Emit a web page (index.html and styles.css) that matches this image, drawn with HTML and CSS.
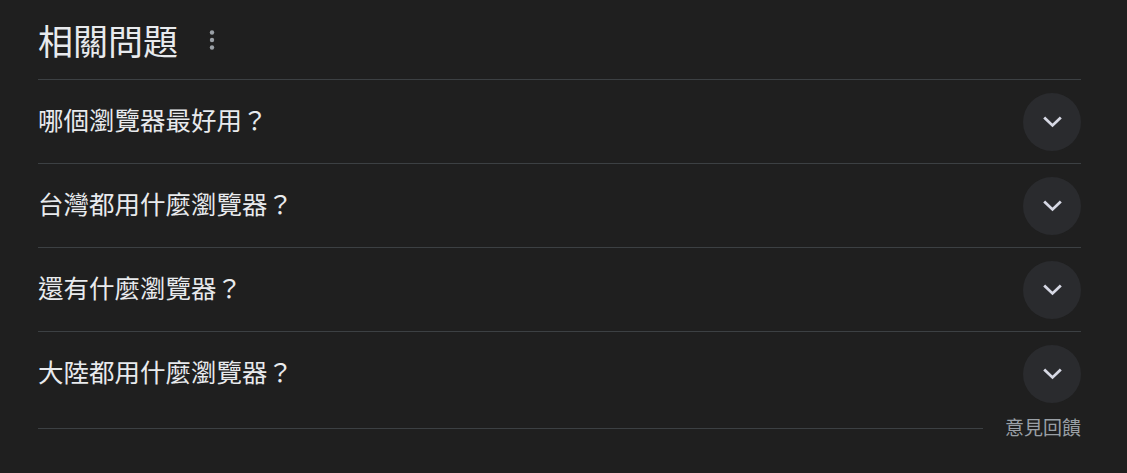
FILE: index.html
```html
<!DOCTYPE html>
<html lang="zh-Hant">

<head>
  <meta charset="utf-8">
  <title>相關問題</title>
  <link rel="stylesheet" href="styles.css">
</head>

<body>
  <div class="related">
    <!-- Header -->
    <div class="related-header">
      <h2 class="related-title">相關問題</h2>
      <svg class="more-icon" width="24" height="24" viewBox="0 0 24 24">
        <circle cx="12" cy="4.5" r="2.2" />
        <circle cx="12" cy="12" r="2.2" />
        <circle cx="12" cy="19.5" r="2.2" />
      </svg>
    </div>

    <!-- Questions -->
    <ul class="question-list">
      <li class="question">
        <span class="question-text">哪個瀏覽器最好用？</span>
        <span class="expand-btn">
          <svg width="24" height="24" viewBox="0 0 24 24"><path d="M2.5 7.5 L12 16.5 L21.5 7.5" /></svg>
        </span>
      </li>
      <li class="question">
        <span class="question-text">台灣都用什麼瀏覽器？</span>
        <span class="expand-btn">
          <svg width="24" height="24" viewBox="0 0 24 24"><path d="M2.5 7.5 L12 16.5 L21.5 7.5" /></svg>
        </span>
      </li>
      <li class="question">
        <span class="question-text">還有什麼瀏覽器？</span>
        <span class="expand-btn">
          <svg width="24" height="24" viewBox="0 0 24 24"><path d="M2.5 7.5 L12 16.5 L21.5 7.5" /></svg>
        </span>
      </li>
      <li class="question">
        <span class="question-text">大陸都用什麼瀏覽器？</span>
        <span class="expand-btn">
          <svg width="24" height="24" viewBox="0 0 24 24"><path d="M2.5 7.5 L12 16.5 L21.5 7.5" /></svg>
        </span>
      </li>
    </ul>

    <!-- Feedback -->
    <div class="feedback">
      <div class="feedback-line"></div>
      <span class="feedback-text">意見回饋</span>
    </div>
  </div>
</body>

</html>
```

FILE: styles.css
```css
/* Reset some default styles */
body,
h2,
ul {
  margin: 0;
  padding: 0;
}

body {
  font-family: 'Noto Sans CJK TC', 'Noto Sans', sans-serif;
  background-color: #1f1f1f;
  color: #e8eaed;
}

.related {
  width: 1043px;
  padding-left: 38px;
}

.related-header {
  display: flex;
  align-items: center;
  height: 79px;
}

.related-title {
  font-size: 35px;
  font-weight: normal;
  line-height: 1;
  color: #e8eaed;
}

.more-icon {
  margin-left: 22px;
  fill: #9aa0a6;
}

.question-list {
  list-style: none;
}

.question {
  display: flex;
  align-items: center;
  justify-content: space-between;
  height: 83px;
  border-top: 1px solid #3c4043;
}

.question-text {
  font-size: 25.5px;
  line-height: 1;
  padding-bottom: 6px;
  color: #e8eaed;
}

.expand-btn {
  display: flex;
  align-items: center;
  justify-content: center;
  width: 58px;
  height: 58px;
  border-radius: 50%;
  background-color: #2a2b2e;
}

.expand-btn svg {
  width: 21px;
  height: 21px;
  fill: none;
  stroke: #d6d8e4;
  stroke-width: 3.2;
}

.feedback {
  display: flex;
  align-items: center;
  margin-top: 2px;
  height: 22px;
}

.feedback-line {
  flex: 1;
  height: 1px;
  background-color: #3c4043;
}

.feedback-text {
  margin-left: 22px;
  font-size: 19px;
  line-height: 1;
  padding-bottom: 4px;
  color: #9aa0a6;
}
```
